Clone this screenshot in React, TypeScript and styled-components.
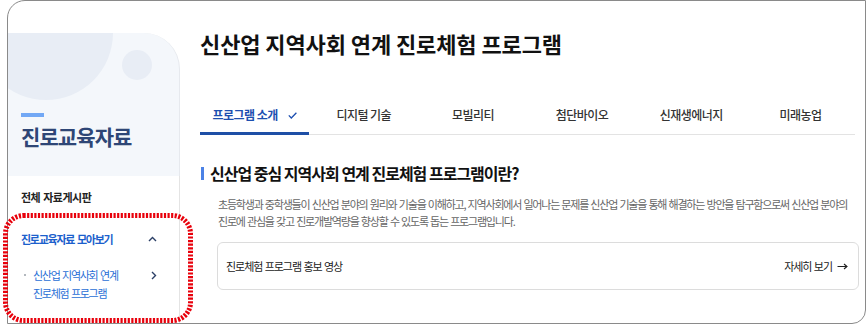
import React from "react";
import styled, { createGlobalStyle, css } from "styled-components";

const GlobalStyle = createGlobalStyle`
  html, body { margin: 0; padding: 0; background: #ffffff; }
  body { font-family: "Noto Sans CJK KR", "Noto Sans", sans-serif; color: #111; }
  * { box-sizing: border-box; }
`;

const Page = styled.div`
  position: relative;
  width: 866px;
  height: 325px;
  overflow: hidden;
`;

const Frame = styled.div`
  margin-left: 7px;
  width: 859px;
  height: 324px;
  border: 1px solid #8a8a8a;
  border-radius: 18px 0 14px 0;
  display: flex;
  overflow: hidden;
  background: #fff;
`;

const Sidebar = styled.aside`
  width: 172px;
  flex: none;
  padding-top: 32px;
  display: flex;
  flex-direction: column;
`;

const SideCard = styled.div`
  position: relative;
  overflow: hidden;
  height: 143px;
  background: #f4f7fb;
  border-top-right-radius: 36px;
  border-right: 1px solid #e6e9ee;
  padding: 80px 0 0 13px;
`;

const Circle = styled.span<{ $size: number; $left: number; $top: number }>`
  position: absolute;
  left: ${(p) => p.$left}px;
  top: ${(p) => p.$top}px;
  width: ${(p) => p.$size}px;
  height: ${(p) => p.$size}px;
  border-radius: 50%;
  background: #e8edf5;
`;

const Accent = styled.div`
  position: relative;
  width: 23px;
  height: 4px;
  background: #72a8f5;
`;

const SideTitle = styled.h2`
  position: relative;
  margin: 6px 0 0;
  font-size: 21px;
  line-height: 26px;
  font-weight: 700;
  letter-spacing: -0.9px;
  color: #2e4676;
`;

const Menu = styled.nav`
  flex: 1;
  border-right: 1px solid #e4e4e4;
  padding: 12px 22px 0 13px;
`;

const MenuLink = styled.div`
  font-size: 11px;
  line-height: 18px;
  font-weight: 700;
  letter-spacing: -0.5px;
  word-spacing: 1px;
  color: #222;
`;

const GroupHead = styled.div`
  margin-top: 24px;
  display: flex;
  align-items: center;
  justify-content: space-between;
  font-size: 11px;
  line-height: 18px;
  font-weight: 700;
  letter-spacing: -1.25px;
  word-spacing: 1.5px;
  color: #1c5fcc;
`;

const SubItem = styled.div`
  margin-top: 18px;
  display: flex;
  align-items: flex-start;
  justify-content: space-between;
`;

const SubLabel = styled.div`
  display: flex;
  align-items: flex-start;
`;

const Bullet = styled.span`
  flex: none;
  width: 12px;
  height: 18px;
  position: relative;
  &::before {
    content: "";
    position: absolute;
    left: 3px;
    top: 8px;
    width: 2px;
    height: 2px;
    border-radius: 50%;
    background: #9aa0a8;
  }
`;

const SubText = styled.span`
  font-size: 11px;
  line-height: 18px;
  letter-spacing: -1.3px;
  word-spacing: 1.5px;
  color: #2a6fd6;
`;

const ChevronBox = styled.span`
  display: flex;
  align-items: center;
  height: 18px;
`;

const Main = styled.main`
  flex: 1;
  padding: 27px 6px 0 20px;
  min-width: 0;
`;

const Title = styled.h1`
  margin: 0;
  font-size: 22px;
  line-height: 30px;
  font-weight: 700;
  letter-spacing: -0.1px;
  color: #111;
`;

const Tabs = styled.div`
  margin-top: 48px;
  width: 655px;
  display: grid;
  grid-template-columns: repeat(6, 1fr);
  border-bottom: 1px solid #e3e3e3;
`;

const Tab = styled.div<{ $active?: boolean }>`
  position: relative;
  display: flex;
  align-items: center;
  justify-content: center;
  gap: 10px;
  padding-bottom: 10px;
  line-height: 18px;
  font-size: 12px;
  letter-spacing: -0.55px;
  font-weight: 500;
  color: #333;
  ${(p) =>
    p.$active &&
    css`
      color: #1d4fb0;
      font-weight: 700;
      &::after {
        content: "";
        position: absolute;
        left: 0;
        right: 0;
        bottom: -1px;
        height: 3px;
        background: #1e4fa6;
      }
    `}
`;

const SectionHead = styled.h3`
  margin: 28px 0 0;
  padding-left: 1px;
  display: flex;
  align-items: center;
  gap: 6px;
  font-size: 16px;
  line-height: 20px;
  font-weight: 700;
  letter-spacing: -1px;
  color: #111;
  &::before {
    content: "";
    width: 3px;
    height: 13px;
    background: #4b82e6;
  }
`;

const Desc = styled.p`
  margin: 13px 0 0 18px;
  font-size: 11px;
  line-height: 17px;
  letter-spacing: -1.2px;
  word-spacing: 1px;
  color: #666;
  white-space: nowrap;
`;

const VideoCard = styled.div`
  margin: 12px 0 0 17px;
  height: 48px;
  border: 1px solid #dcdcdc;
  border-radius: 6px;
  display: flex;
  align-items: center;
  justify-content: space-between;
  padding: 0 10px 0 8px;
  font-size: 11px;
  letter-spacing: -1.05px;
  word-spacing: 1px;
  color: #222;
`;

const More = styled.span`
  display: flex;
  align-items: center;
  gap: 5px;
`;

const Highlight = styled.svg`
  position: absolute;
  left: 3px;
  top: 213px;
  pointer-events: none;
`;

const ChevronUp = () => (
  <svg width="9" height="6" viewBox="0 0 9 6">
    <polyline points="1,5 4.5,1.5 8,5" fill="none" stroke="#2b3f66" strokeWidth="1.4" />
  </svg>
);

const ChevronRight = () => (
  <svg width="6" height="9" viewBox="0 0 6 9">
    <polyline points="1,1 4.5,4.5 1,8" fill="none" stroke="#2b3f66" strokeWidth="1.4" />
  </svg>
);

const Check = () => (
  <svg width="9" height="7" viewBox="0 0 9 7">
    <polyline points="0.8,3.4 3.3,6 8.4,0.8" fill="none" stroke="#1d4fb0" strokeWidth="1.3" />
  </svg>
);

const Arrow = () => (
  <svg width="11" height="7" viewBox="0 0 11 7">
    <line x1="0.5" y1="3.5" x2="10" y2="3.5" stroke="#222" strokeWidth="1.1" />
    <polyline points="7,1 10,3.5 7,6" fill="none" stroke="#222" strokeWidth="1.1" />
  </svg>
);

const tabs = ["프로그램 소개", "디지털 기술", "모빌리티", "첨단바이오", "신재생에너지", "미래농업"];

export default function App() {
  return (
    <>
      <GlobalStyle />
      <Page>
        <Frame>
          <Sidebar>
            <SideCard>
              <Circle $size={134} $left={-29} $top={-67} />
              <Circle $size={30} $left={114} $top={17} />
              <Accent />
              <SideTitle>진로교육자료</SideTitle>
            </SideCard>
            <Menu>
              <MenuLink>전체 자료게시판</MenuLink>
              <GroupHead>
                <span>진로교육자료 모아보기</span>
                <ChevronUp />
              </GroupHead>
              <SubItem>
                <SubLabel>
                  <Bullet />
                  <SubText>
                    신산업 지역사회 연계
                    <br />
                    진로체험 프로그램
                  </SubText>
                </SubLabel>
                <ChevronBox>
                  <ChevronRight />
                </ChevronBox>
              </SubItem>
            </Menu>
          </Sidebar>
          <Main>
            <Title>신산업 지역사회 연계 진로체험 프로그램</Title>
            <Tabs>
              {tabs.map((t, i) => (
                <Tab key={t} $active={i === 0}>
                  <span>{t}</span>
                  {i === 0 && <Check />}
                </Tab>
              ))}
            </Tabs>
            <SectionHead>신산업 중심 지역사회 연계 진로체험 프로그램이란?</SectionHead>
            <Desc>
              초등학생과 중학생들이 신산업 분야의 원리와 기술을 이해하고, 지역사회에서 일어나는 문제를 신산업 기술을 통해 해결하는 방안을 탐구함으로써 신산업 분야의
              <br />
              진로에 관심을 갖고 진로개발역량을 향상할 수 있도록 돕는 프로그램입니다.
            </Desc>
            <VideoCard>
              <span>진로체험 프로그램 홍보 영상</span>
              <More>
                자세히 보기
                <Arrow />
              </More>
            </VideoCard>
          </Main>
        </Frame>
        <Highlight width="190" height="110" viewBox="0 0 190 110">
          <rect
            x="2.5"
            y="2.5"
            width="185"
            height="105"
            rx="18"
            fill="none"
            stroke="#e8000b"
            strokeWidth="5"
            strokeDasharray="2.2 1.4"
          />
        </Highlight>
      </Page>
    </>
  );
}
